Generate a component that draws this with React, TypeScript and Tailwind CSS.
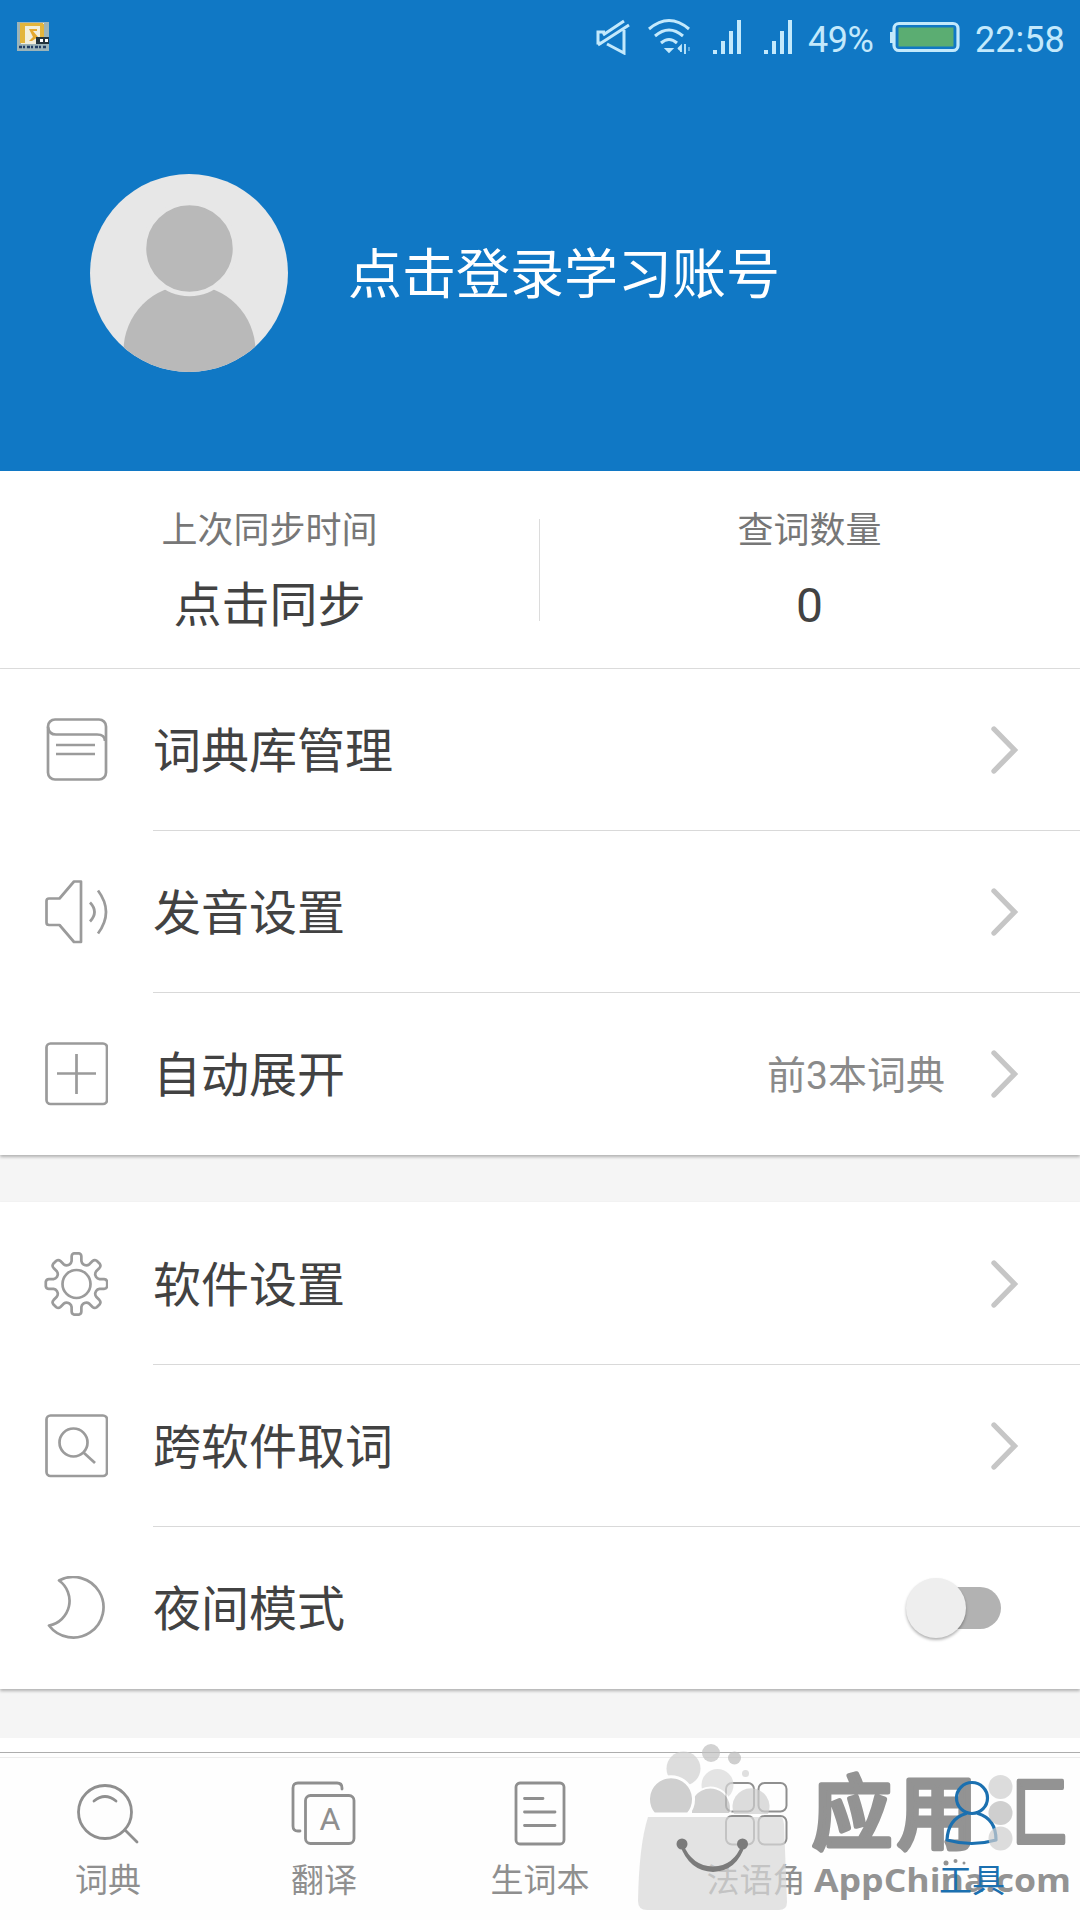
import type { ReactNode } from "react";

const iconProps = {
  width: 64,
  height: 64,
  viewBox: "0 0 64 64",
  fill: "none",
  stroke: "#9b9b9b",
  strokeWidth: 2.7,
  strokeLinejoin: "round" as const,
};

const tabIconProps = {
  width: 72,
  height: 66,
  viewBox: "0 0 72 66",
  fill: "none",
  strokeWidth: 2.8,
  strokeLinecap: "round" as const,
  strokeLinejoin: "round" as const,
};

function gearPath() {
  const pt = (r: number, deg: number) => {
    const a = (deg * Math.PI) / 180;
    return `${(32.5 + r * Math.sin(a)).toFixed(2)} ${(32 - r * Math.cos(a)).toFixed(2)}`;
  };
  let d = "";
  for (let k = 0; k < 8; k++) {
    const a = k * 45;
    d += `${k === 0 ? "M" : "L"}${pt(20.8, a - 19.5)} Q${pt(21.5, a - 14)} ${pt(23.5, a - 12)} L${pt(28, a - 10)} Q${pt(30.6, a - 9)} ${pt(30.8, a - 4)} L${pt(30.8, a + 4)} Q${pt(30.6, a + 9)} ${pt(28, a + 10)} L${pt(23.5, a + 12)} Q${pt(21.5, a + 14)} ${pt(20.8, a + 19.5)}`;
  }
  return d + "Z";
}

const BookIcon = () => (
  <svg {...iconProps}>
    <rect x="4" y="1.500" width="58" height="60" rx="7" />
    <path d="M4 9Q5 16.500 12 16.500H53Q61 16.500 61 23" />
    <path d="M12 27H51M12 36H51" />
  </svg>
);
const SpeakerIcon = () => (
  <svg {...iconProps}>
    <path d="M5 18.500H15.500L30 1.500H37V62H30L15.500 45H5Q2.500 45 2.500 42.500V21Q2.500 18.500 5 18.500Z" />
    <path d="M46 22.500Q55 32 46 41.500M54 10.500Q70 32 54 53.500" />
  </svg>
);
const PlusIcon = () => (
  <svg {...iconProps}>
    <rect x="2.500" y="1.500" width="60.500" height="60.500" rx="4" />
    <path d="M13 31.500H52M32.500 12V52" />
  </svg>
);
const GearIcon = () => (
  <svg {...iconProps}>
    <path d={gearPath()} />
    <circle cx="32.500" cy="32" r="14" />
  </svg>
);
const SearchBoxIcon = () => (
  <svg {...iconProps}>
    <rect x="2.500" y="1.500" width="60.500" height="60.500" rx="4" />
    <circle cx="29.500" cy="28.500" r="14" />
    <path d="M39.500 38.500L51 49" />
  </svg>
);
const MoonIcon = () => (
  <svg {...iconProps}>
    <path d="M15 4.500A30.300 30.300 0 1 1 5 49.500A25 25 0 0 0 15 4.500Z" />
  </svg>
);

const Chevron = () => (
  <svg width="30" height="50" viewBox="0 0 30 50" fill="none" stroke="#c6c6c6" strokeWidth="5.300" strokeLinecap="round">
    <path d="M5 4L25.500 25L5 46" />
  </svg>
);

function Row({ icon, label, last, children }: { icon: ReactNode; label: string; last?: boolean; children?: ReactNode }) {
  return (
    <div className="flex h-[162px]">
      <div className="flex w-[153px] items-center pl-11">{icon}</div>
      <div className={`flex flex-1 items-center justify-between ${last ? "" : "border-b border-[#d9d9d9]"}`}>
        <span className="pt-1 text-[48px] leading-[60px] text-[#424242]">{label}</span>
        {children ?? (
          <div className="pr-[61px]">
            <Chevron />
          </div>
        )}
      </div>
    </div>
  );
}

function Tab({ icon, label, active }: { icon: ReactNode; label: string; active?: boolean }) {
  return (
    <div className={`flex flex-1 flex-col items-center pt-[27px] ${active ? "text-[#1b70b0]" : "text-[#8f8f8f]"}`}>
      {icon}
      <span className="mt-[15px] text-[33px] leading-[40px]">{label}</span>
    </div>
  );
}

const Signal = () => (
  <svg width="29" height="34" viewBox="0 0 29 34" fill="#c3e9fc">
    <path d="M0 30h4v4h-4zM8 21h4v13h-4zM16 11h4v23h-4zM24 0h4v34h-4z" />
  </svg>
);

function StatusBar() {
  return (
    <div className="flex h-[74px] items-center pr-4 pl-4 text-[36px] leading-[40px] text-[#c3e9fc]">
      <svg width="36" height="32" viewBox="0 0 36 32" className="mr-auto">
        <rect x="1" y="1" width="32" height="29" fill="#9db4b8" />
        <rect x="5" y="2" width="23" height="21" fill="#f3efdc" />
        <path d="M4 2h5v20h-5zM9 2h18v3h-18zM24 3h4v14h-4z" fill="#e3b53c" />
        <path d="M13 8h8v2h-4l5 6-6 4h-3l4-4z" fill="#e5a92f" />
        <rect x="20" y="16" width="13" height="7" fill="#24343c" />
        <path d="M24 18h3v3h-3zM29 18h3v3h-3z" fill="#fff" />
        <path d="M3 26h27" stroke="#233f66" strokeWidth="2.500" strokeDasharray="3 1 2 2" />
      </svg>
      <svg width="36" height="36" viewBox="0 0 36 36" fill="none" stroke="#c3e9fc" strokeWidth="3" className="-ml-px">
        <path d="M10 13H3V24H7M12 25L29 34V11M3 26L34 6M8 16L29 2" />
      </svg>
      <svg width="44" height="38" viewBox="0 0 44 38" fill="none" stroke="#c3e9fc" strokeWidth="3" className="ml-[17px]">
        <path d="M1 11Q21 -6 41 11M7 18Q21 6 35 18M13 25Q21 18 29 25" />
        <path d="M18 31L24 31L21 34ZM30 31L33 28V34M37 26V36" fill="#c3e9fc" strokeWidth="1.800" />
        <path d="M41 29V33" strokeWidth="1.500" opacity="0.6" />
      </svg>
      <div className="ml-[21px]"><Signal /></div>
      <div className="ml-[22px]"><Signal /></div>
      <span className="ml-[15px] w-[67px] pt-1.5 tracking-[-0.5px]">49%</span>
      <svg width="70" height="32" viewBox="0 0 70 32" fill="none" className="ml-[15px]">
        <rect x="4" y="2.500" width="64" height="27" rx="5" stroke="#c3e9fc" strokeWidth="3.200" />
        <rect x="8.500" y="6.500" width="55" height="19" fill="#5bad72" />
        <path d="M0 11h3v11h-3z" fill="#c3e9fc" />
      </svg>
      <span className="ml-[15px] w-[89px] pt-1.5">22:58</span>
    </div>
  );
}

/* Store logo lettering, below the tab icons. */
const BrandText = () => (
  <svg className="absolute bottom-0 left-[600px]" width="480" height="190" viewBox="0 0 480 190">
    <g fill="#939393" stroke="#939393" strokeWidth="5" strokeLinejoin="round" strokeLinecap="round" style={{ fontFamily: "'Noto Sans CJK SC', sans-serif", fontWeight: 500 }}>
      <text x="212" y="112" fontSize="80">应</text>
      <text x="297" y="112" fontSize="80">用</text>
      <text transform="translate(412 111) scale(0.68 0.93)" fontSize="83">匚</text>
    </g>
    <g fill="#939393">
      <circle cx="346" cy="133" r="2.500" />
      <circle cx="355.500" cy="131" r="2" />
      <circle cx="364" cy="133" r="1.500" />
      <text x="214" y="162" fontSize="33" textLength="257" lengthAdjust="spacingAndGlyphs" style={{ fontFamily: "'Open Sans', 'Noto Sans', sans-serif", fontWeight: 700 }}>
        AppChina.com
      </text>
    </g>
  </svg>
);

/* Store logo bag and bubbles, translucent above the tab icons. */
const BrandBag = () => (
  <svg className="pointer-events-none absolute bottom-0 left-[600px]" width="480" height="190" viewBox="0 0 480 190">
    <g opacity="0.7">
      <circle cx="83.500" cy="38.500" r="17" fill="#d0d0d0" />
      <circle cx="111" cy="23" r="9" fill="#c0c0c0" />
      <circle cx="134.500" cy="28" r="6.500" fill="#bababa" />
      <circle cx="145.500" cy="43.500" r="3.500" fill="#d2d2d2" />
      <circle cx="117.500" cy="55" r="16" fill="#dadada" />
      <path d="M134 84A18.500 18.500 0 1 1 168 84Z" fill="#cfcfcf" />
      <path d="M91 84V72A20 20 0 1 1 130 84Z" fill="#c0c0c0" stroke="#fff" strokeWidth="2" />
      <path d="M54 84A22.500 22.500 0 1 1 88 84Z" fill="#bcbcbc" stroke="#fff" strokeWidth="3" />
      <path d="M48 87H181Q183 87 184 94L187 172Q187 180 179 180H47Q38 180 38 171Q39 115 48 87Z" fill="#d9d9d9" />
      <circle cx="400.500" cy="57" r="12" fill="#cfcfcf" />
      <circle cx="400.500" cy="83" r="12" fill="#bcbcbc" />
      <circle cx="400.500" cy="108.500" r="12" fill="#cfcfcf" />
    </g>
    <g fill="#7b7b7b">
      <circle cx="82" cy="114" r="5.500" />
      <circle cx="142.500" cy="114" r="5.500" />
      <path d="M80 115Q89 141 113 142Q137 141 145 115L142 114Q134 136 113 136.500Q92 136 83 114Z" />
    </g>
  </svg>
);

export default function App() {
  return (
    <div className="flex h-[1920px] w-[1080px] flex-col overflow-hidden bg-[#f5f5f5] font-[Roboto,'Noto_Sans_CJK_SC',sans-serif]">
      <header className="h-[471px] shrink-0 bg-[#1078c5]">
        <StatusBar />
        <div className="flex items-center pt-[100px] pl-[90px]">
          <svg width="198" height="198" viewBox="0 0 198 198">
            <defs>
              <clipPath id="avatar"><circle cx="99" cy="99" r="99" /></clipPath>
            </defs>
            <g clipPath="url(#avatar)">
              <rect width="198" height="198" fill="#e7e7e7" />
              <circle cx="99.500" cy="177" r="66" fill="#b9b9b9" />
              <circle cx="99.500" cy="74.500" r="45.500" fill="#b9b9b9" stroke="#e7e7e7" strokeWidth="4.500" />
            </g>
          </svg>
          <span className="ml-[60px] pt-1.5 text-[54px] leading-[60px] text-white">点击登录学习账号</span>
        </div>
      </header>

      <section className="flex h-[198px] shrink-0 items-center border-b border-[#dedede] bg-white text-center">
        <div className="w-[539px] pt-1.5">
          <div className="text-[36px] leading-[44px] text-[#777]">上次同步时间</div>
          <div className="mt-[23px] text-[48px] leading-[60px] text-[#424242]">点击同步</div>
        </div>
        <div className="h-[102px] w-px bg-[#dcdcdc]" />
        <div className="w-[539px] pt-1.5">
          <div className="text-[36px] leading-[44px] text-[#777]">查词数量</div>
          <div className="mt-[23px] text-[48px] leading-[60px] text-[#424242]">0</div>
        </div>
      </section>

      <section className="h-[486px] shrink-0 bg-white shadow-[0_2px_3px_rgba(0,0,0,0.28)]">
        <Row icon={<BookIcon />} label="词典库管理" />
        <Row icon={<SpeakerIcon />} label="发音设置" />
        <Row icon={<PlusIcon />} label="自动展开" last>
          <div className="flex items-center pr-[61px]">
            <span className="mr-[44px] pt-1 text-[39px] leading-[50px] text-[#8a8a8a]">前3本词典</span>
            <Chevron />
          </div>
        </Row>
      </section>

      <section className="mt-[47px] h-[487px] shrink-0 bg-white pt-px shadow-[0_2px_3px_rgba(0,0,0,0.28)]">
        <Row icon={<GearIcon />} label="软件设置" />
        <Row icon={<SearchBoxIcon />} label="跨软件取词" />
        <Row icon={<MoonIcon />} label="夜间模式" last>
          <div className="mr-[79px] flex h-[42px] w-[90px] items-center rounded-full bg-[#b2b2b2]">
            <div className="-ml-[5px] size-[60px] shrink-0 rounded-full bg-[#eee] shadow-[0_2px_3px_rgba(0,0,0,0.3)]" />
          </div>
        </Row>
      </section>

      <div className="mt-[49px] h-[14px] shrink-0 bg-white" />
      <footer className="relative flex flex-1 flex-col border-t border-[#adadad] bg-[#fefefe]">
        <div className="mt-1 h-px bg-[#ececec]" />
        <BrandText />
        <nav className="relative -mt-[5px] flex flex-1">
          <Tab
            label="词典"
            icon={
              <svg {...tabIconProps} stroke="#8f8f8f">
                <circle cx="33" cy="32" r="26.500" />
                <path d="M22 21Q33 12 44 21M53 50L65 62" />
              </svg>
            }
          />
          <Tab
            label="翻译"
            icon={
              <svg {...tabIconProps} stroke="#8f8f8f">
                <path d="M12 51H10Q5 51 5 46V8Q5 3 10 3H49Q54 3 54 8V9" />
                <rect x="17.500" y="15.500" width="48.500" height="48" rx="5" />
                <text x="42" y="50" fontSize="32" textAnchor="middle" fill="#8f8f8f" stroke="none" style={{ fontFamily: "Roboto, sans-serif" }}>
                  A
                </text>
              </svg>
            }
          />
          <Tab
            label="生词本"
            icon={
              <svg {...tabIconProps} stroke="#8f8f8f">
                <rect x="12" y="3" width="48" height="61" rx="4" />
                <path d="M20.500 18.500H39M20.500 32H51M20.500 45.500H51" />
              </svg>
            }
          />
          <Tab
            label="法语角"
            icon={
              <svg {...tabIconProps} strokeWidth={2} stroke="#8f8f8f">
                <rect x="6" y="3" width="28" height="28.500" rx="6" />
                <rect x="38.500" y="3" width="28" height="28.500" rx="6" />
                <rect x="6" y="36" width="28" height="28.500" rx="6" />
                <rect x="38.500" y="36" width="28" height="28.500" rx="6" />
              </svg>
            }
          />
          <Tab
            label="工具"
            active
            icon={
              <svg {...tabIconProps} strokeWidth={3.200} stroke="#1b70b0">
                <circle cx="36" cy="18" r="15.500" />
                <path d="M30 33.500Q12 39 11 60Q36 67 60 60Q60 39 42 33.500" />
              </svg>
            }
          />
        </nav>
        <BrandBag />
      </footer>
    </div>
  );
}
